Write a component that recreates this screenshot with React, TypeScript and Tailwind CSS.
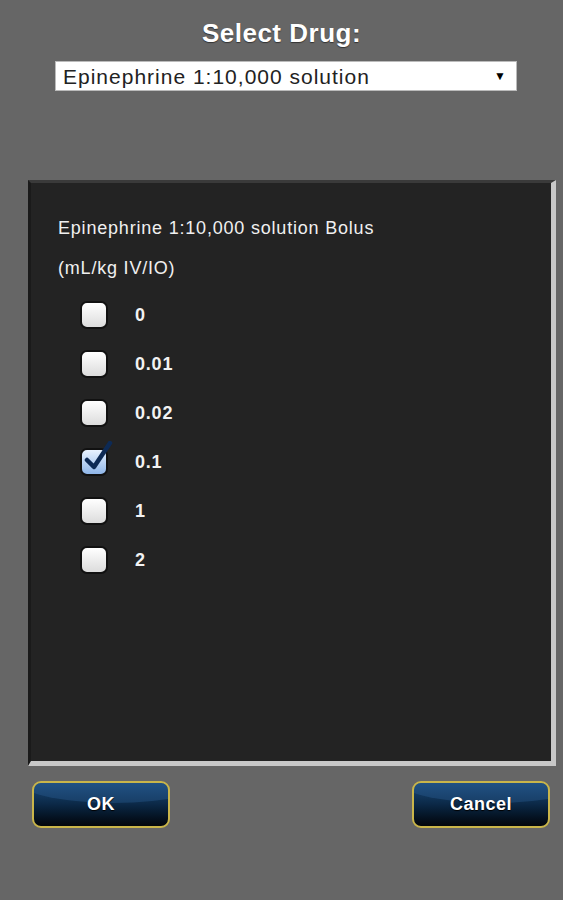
import { useState } from 'react';

const doses = ['0', '0.01', '0.02', '0.1', '1', '2'];

function Box({ checked, onClick }: { checked: boolean; onClick: () => void }) {
  return (
    <button
      onClick={onClick}
      className={`relative w-[28px] h-[28px] rounded-[7px] border-2 border-[#111] ${
        checked
          ? 'bg-gradient-to-b from-[#e8f2ff] to-[#8fb6e8]'
          : 'bg-gradient-to-b from-[#ffffff] to-[#dcdcdc]'
      }`}
    >
      {checked && (
        <svg viewBox="0 0 30 30" className="absolute left-[2px] top-[-9px] w-[30px] h-[30px]">
          <path d="M3 19 L10 26 L26 2" fill="none" stroke="#0d2a55" strokeWidth="4.5" strokeLinecap="round" strokeLinejoin="round" />
        </svg>
      )}
    </button>
  );
}

function NavButton({ label }: { label: string }) {
  return (
    <button className="relative overflow-hidden w-[138px] h-[47px] rounded-[9px] border-2 border-[#c9b54a] bg-gradient-to-b from-[#1b4b7c] via-[#0b2846] to-[#02060c] text-white font-bold text-[18px] tracking-[0.5px] [text-shadow:0_1px_1px_#000]">
      <span className="absolute -left-[20px] -top-[30px] w-[200px] h-[50px] rounded-[50%] bg-[#2a5d92] opacity-40" />
      <span className="relative">{label}</span>
    </button>
  );
}

export default function App() {
  const [selected, setSelected] = useState<string>('0.1');

  return (
    <div className="w-[563px] h-[900px] bg-[#666666] overflow-hidden" style={{ fontFamily: '"Liberation Sans", Arial, sans-serif' }}>
      <div className="pt-[17px] text-center text-white font-bold text-[26px] tracking-[0.5px] leading-[32px] [text-shadow:0_1px_1px_#333]">
        Select Drug:
      </div>
      <div className="mx-[55px] mt-[12px] h-[30px] w-[462px] bg-white border border-[#bbbbbb] flex items-center justify-between pl-[7px] pr-[10px]">
        <span className="text-[21px] tracking-[1px] text-[#222] leading-none">Epinephrine 1:10,000 solution</span>
        <span className="text-[12px] text-black">▼</span>
      </div>

      <div className="ml-[28px] mt-[89px] w-[528px] h-[586px] border-t-[3px] border-l-[3px] border-t-[#3a3a3a] border-l-[#1a1a1a] border-r-[5px] border-b-[5px] border-r-[#c8c8c8] border-b-[#c8c8c8] bg-[#232323]">
        <div className="pl-[27px] pt-[25px] text-[#f0f0f0] text-[18px] tracking-[0.8px] leading-[40px]">
          <div>Epinephrine 1:10,000 solution Bolus</div>
          <div>(mL/kg IV/IO)</div>
        </div>
        <div className="pl-[49px] mt-[13px] flex flex-col gap-[21px]">
          {doses.map(d => (
            <div key={d} className="flex items-center gap-[27px]">
              <Box checked={selected === d} onClick={() => setSelected(d)} />
              <span className="text-[#f2f2f2] font-bold text-[18px] tracking-[0.8px]">{d}</span>
            </div>
          ))}
        </div>
      </div>

      <div className="mt-[15px] px-[32px] pr-[13px] flex justify-between">
        <NavButton label="OK" />
        <NavButton label="Cancel" />
      </div>
    </div>
  );
}
